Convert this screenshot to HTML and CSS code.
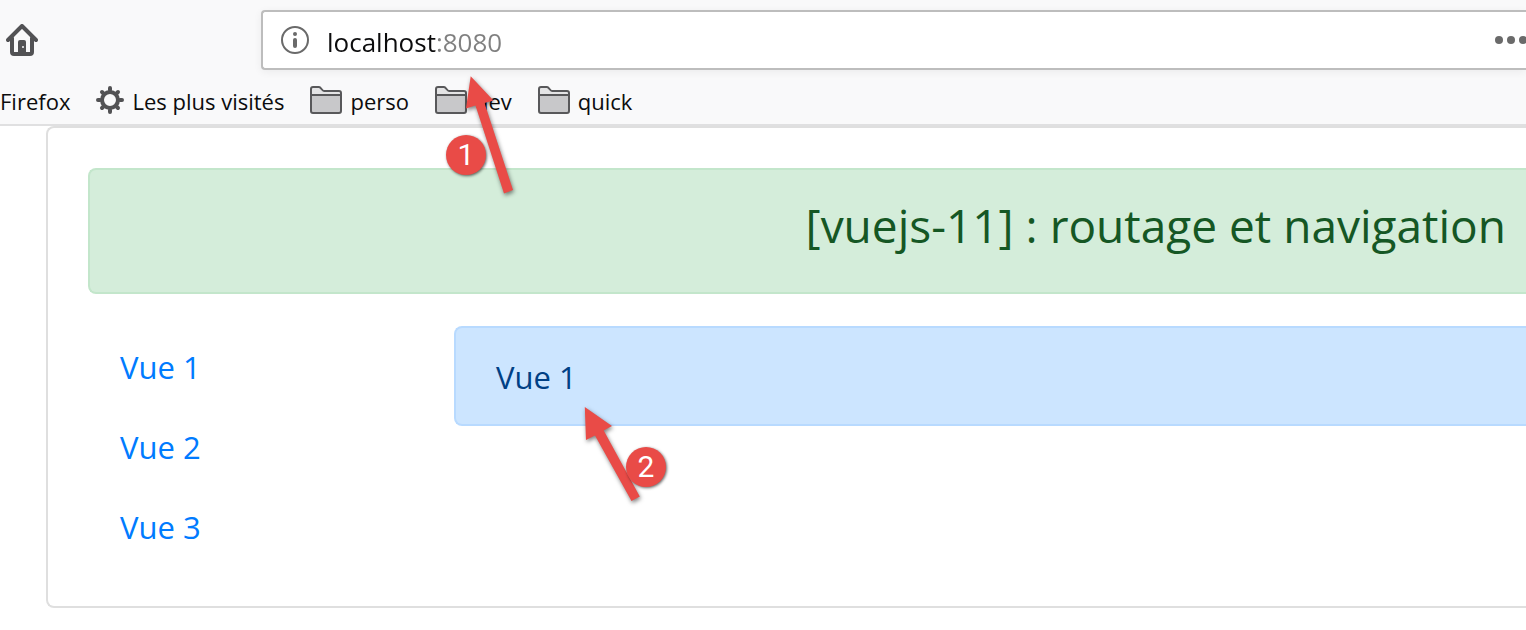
FILE: index.html
```html
<!DOCTYPE html>
<html lang="fr">
<head>
<meta charset="utf-8">
<meta name="viewport" content="width=device-width, initial-scale=1">
<title>[vuejs-11] : routage et navigation</title>
<link rel="stylesheet" href="styles.css">
</head>
<body>
<svg class="defs" aria-hidden="true">
  <symbol id="folder" viewBox="0 0 32 28">
    <path d="M1 9V3a2 2 0 0 1 2-2h6c2 0 3 4 5 4h15a2 2 0 0 1 2 2v2z" fill="#e4e4e5"/>
    <path d="M1 9h30v16a2 2 0 0 1-2 2H3a2 2 0 0 1-2-2z" fill="#c8c8ca"/>
    <path d="M1 9V3a2 2 0 0 1 2-2h6c2 0 3 4 5 4h15a2 2 0 0 1 2 2v18a2 2 0 0 1-2 2H3a2 2 0 0 1-2-2zM1 9h30" fill="none" stroke="#58585a" stroke-width="2"/>
  </symbol>
</svg>
<header class="browser">
  <div class="toolbar">
    <button class="icon-button" type="button" aria-label="Accueil">
      <svg class="home" viewBox="0 0 32 32" aria-hidden="true">
        <path d="M2 16 16 2l14 14M6 14v14a2 2 0 0 0 2 2h16a2 2 0 0 0 2-2V14" fill="none" stroke="#525254" stroke-width="4" stroke-linecap="round" stroke-linejoin="round"/>
        <path d="M12 30V18q0-2 2-2h4q2 0 2 2v12z" fill="#525254"/>
        <circle cx="17" cy="23" r="1" fill="#f9f9fa"/>
      </svg>
    </button>
    <div class="urlbar">
      <button class="icon-button" type="button" aria-label="Informations du site">
        <svg class="info" viewBox="0 0 28 28" aria-hidden="true">
          <circle cx="14" cy="14" r="13" fill="none" stroke="#6a6a6a" stroke-width="2"/>
          <circle cx="14" cy="8" r="2" fill="#6a6a6a"/>
          <rect x="12" y="12" width="4" height="10" rx="2" fill="#6a6a6a"/>
        </svg>
      </button>
      <input class="url" type="text" value="localhost:8080" aria-label="Adresse">
      <button class="icon-button" type="button" aria-label="Actions de la page">
        <svg class="dots" viewBox="0 0 31 8" aria-hidden="true" fill="#6a6a6a">
          <circle cx="4" cy="4" r="4"/><circle cx="16" cy="4" r="4"/><circle cx="28" cy="4" r="4"/>
        </svg>
      </button>
    </div>
  </div>
  <nav class="bookmarks" aria-label="Marque-pages">
    <a href="#"><span>Firefox</span></a>
    <a href="#">
      <svg class="gear" viewBox="-14 -14 28 28" aria-hidden="true" stroke="#525254" fill="none">
        <circle r="8" stroke-width="4"/>
        <path d="M0-10V-12M0 10V12M-10 0H-12M10 0H12M-7-7-8-8M7-7 8-8M-7 7-8 8M7 7 8 8" stroke-width="4" stroke-linecap="round"/>
      </svg><span>Les plus visités</span></a>
    <a href="#"><svg class="folder" aria-hidden="true"><use href="#folder"/></svg><span>perso</span></a>
    <a href="#"><svg class="folder" aria-hidden="true"><use href="#folder"/></svg><span>dev</span></a>
    <a href="#"><svg class="folder" aria-hidden="true"><use href="#folder"/></svg><span>quick</span></a>
  </nav>
</header>
<main class="card">
  <div class="alert alert-success"><h1>[vuejs-11] : routage et navigation</h1></div>
  <div class="row">
    <nav class="views" aria-label="Vues">
      <a href="#vue1">Vue 1</a>
      <a href="#vue2">Vue 2</a>
      <a href="#vue3">Vue 3</a>
    </nav>
    <div class="alert alert-primary">Vue 1</div>
  </div>
</main>
<svg class="arrows" width="700" height="520" aria-hidden="true" fill="#e94b47">
  <path d="M470.700 76.300 493.500 100.500 484.500 103 513 190 504 193.500 475.500 105.500 466 108.500z"/>
  <path d="M584.800 407 612 426 603.700 430.500 639.800 496.500 631.500 501 595 435.500 586 440z"/>
</svg>
<span class="badge badge-one">1</span>
<span class="badge badge-two">2</span>
</body>
</html>
```
FILE: styles.css
```css
* { box-sizing: border-box; }
body {
  margin: 0;
  position: relative;
  overflow-x: hidden;
  background: #fff;
  color: #0c0c0d;
  font-family: "Segoe UI", "Open Sans", "Noto Sans", sans-serif;
}
a { text-decoration: none; }
.defs { display: none; }
.browser {
  background: #f9f9fa;
  border-bottom: 2px solid #e0e0e1;
}
.toolbar {
  display: flex;
  align-items: center;
  gap: 223px;
  padding: 10px 0 0 6px;
}
.icon-button {
  display: flex;
  flex: none;
  padding: 0;
  border: 0;
  background: none;
}
.home { width: 32px; height: 32px; }
.info { width: 28px; height: 28px; }
.dots { width: 31px; height: 8px; }
.urlbar {
  display: flex;
  flex: 1;
  align-items: center;
  gap: 18px;
  height: 60px;
  min-width: 0;
  padding-left: 18px;
  border: 2px solid #bdbdbd;
  border-right: 0;
  border-radius: 4px 0 0 4px;
  background: #fff;
  box-shadow: 0 2px 8px rgba(0, 0, 0, 0.06);
}
.url {
  flex: 1;
  min-width: 0;
  height: 48px;
  padding: 4px 0 0;
  border: 0;
  outline: 0;
  background: linear-gradient(to right, #0c0c0d 109px, #808080 109px);
  -webkit-background-clip: text;
  background-clip: text;
  color: transparent;
  font: 26px "Segoe UI", "Open Sans", "Noto Sans", sans-serif;
}
.bookmarks {
  display: flex;
  align-items: center;
  gap: 26px;
  height: 54px;
  padding-top: 6px;
  font-size: 22px;
  line-height: 32px;
}
.bookmarks a {
  display: flex;
  align-items: center;
  gap: 8px;
  color: #0c0c0d;
}
.bookmarks span { padding-top: 2px; }
.gear { width: 28px; height: 28px; }
.folder { width: 32px; height: 28px; }
.card {
  margin-left: 46px;
  padding: 40px 0 40px 40px;
  border: 2px solid #dfdfdf;
  border-right: 0;
  border-radius: 8px 0 0 8px;
}
.alert {
  border: 2px solid;
  border-right: 0;
  border-radius: 8px 0 0 8px;
}
.alert-success {
  margin-bottom: 32px;
  padding: 26px 20px 38px 40px;
  border-color: #c3e6cb;
  background: #d4edda;
  color: #155724;
  text-align: right;
}
h1 {
  margin: 0;
  font-size: 46px;
  font-weight: 400;
  line-height: 58px;
}
.row {
  display: grid;
  grid-template-columns: 366px 1fr;
  align-items: start;
}
.views {
  display: flex;
  flex-direction: column;
  font-size: 31px;
  line-height: 48px;
}
.views a {
  padding: 17px 32px 15px;
  color: #007bff;
}
.alert-primary {
  padding: 25px 40px 23px;
  border-color: #b8daff;
  background: #cce5ff;
  color: #004085;
  font-size: 31px;
  line-height: 48px;
}
.arrows {
  position: absolute;
  top: 0;
  left: 0;
  pointer-events: none;
  filter: drop-shadow(1px 2px 2px rgba(0, 0, 0, 0.5));
}
.badge {
  position: absolute;
  width: 40px;
  height: 40px;
  border-radius: 50%;
  background: #e94b47;
  box-shadow: 1px 1px 3px rgba(0, 0, 0, 0.6);
  color: #fff;
  font: 30px/40px Roboto, sans-serif;
  text-align: center;
}
.badge-one { top: 135px; left: 446px; }
.badge-two { top: 447px; left: 626px; }
```
